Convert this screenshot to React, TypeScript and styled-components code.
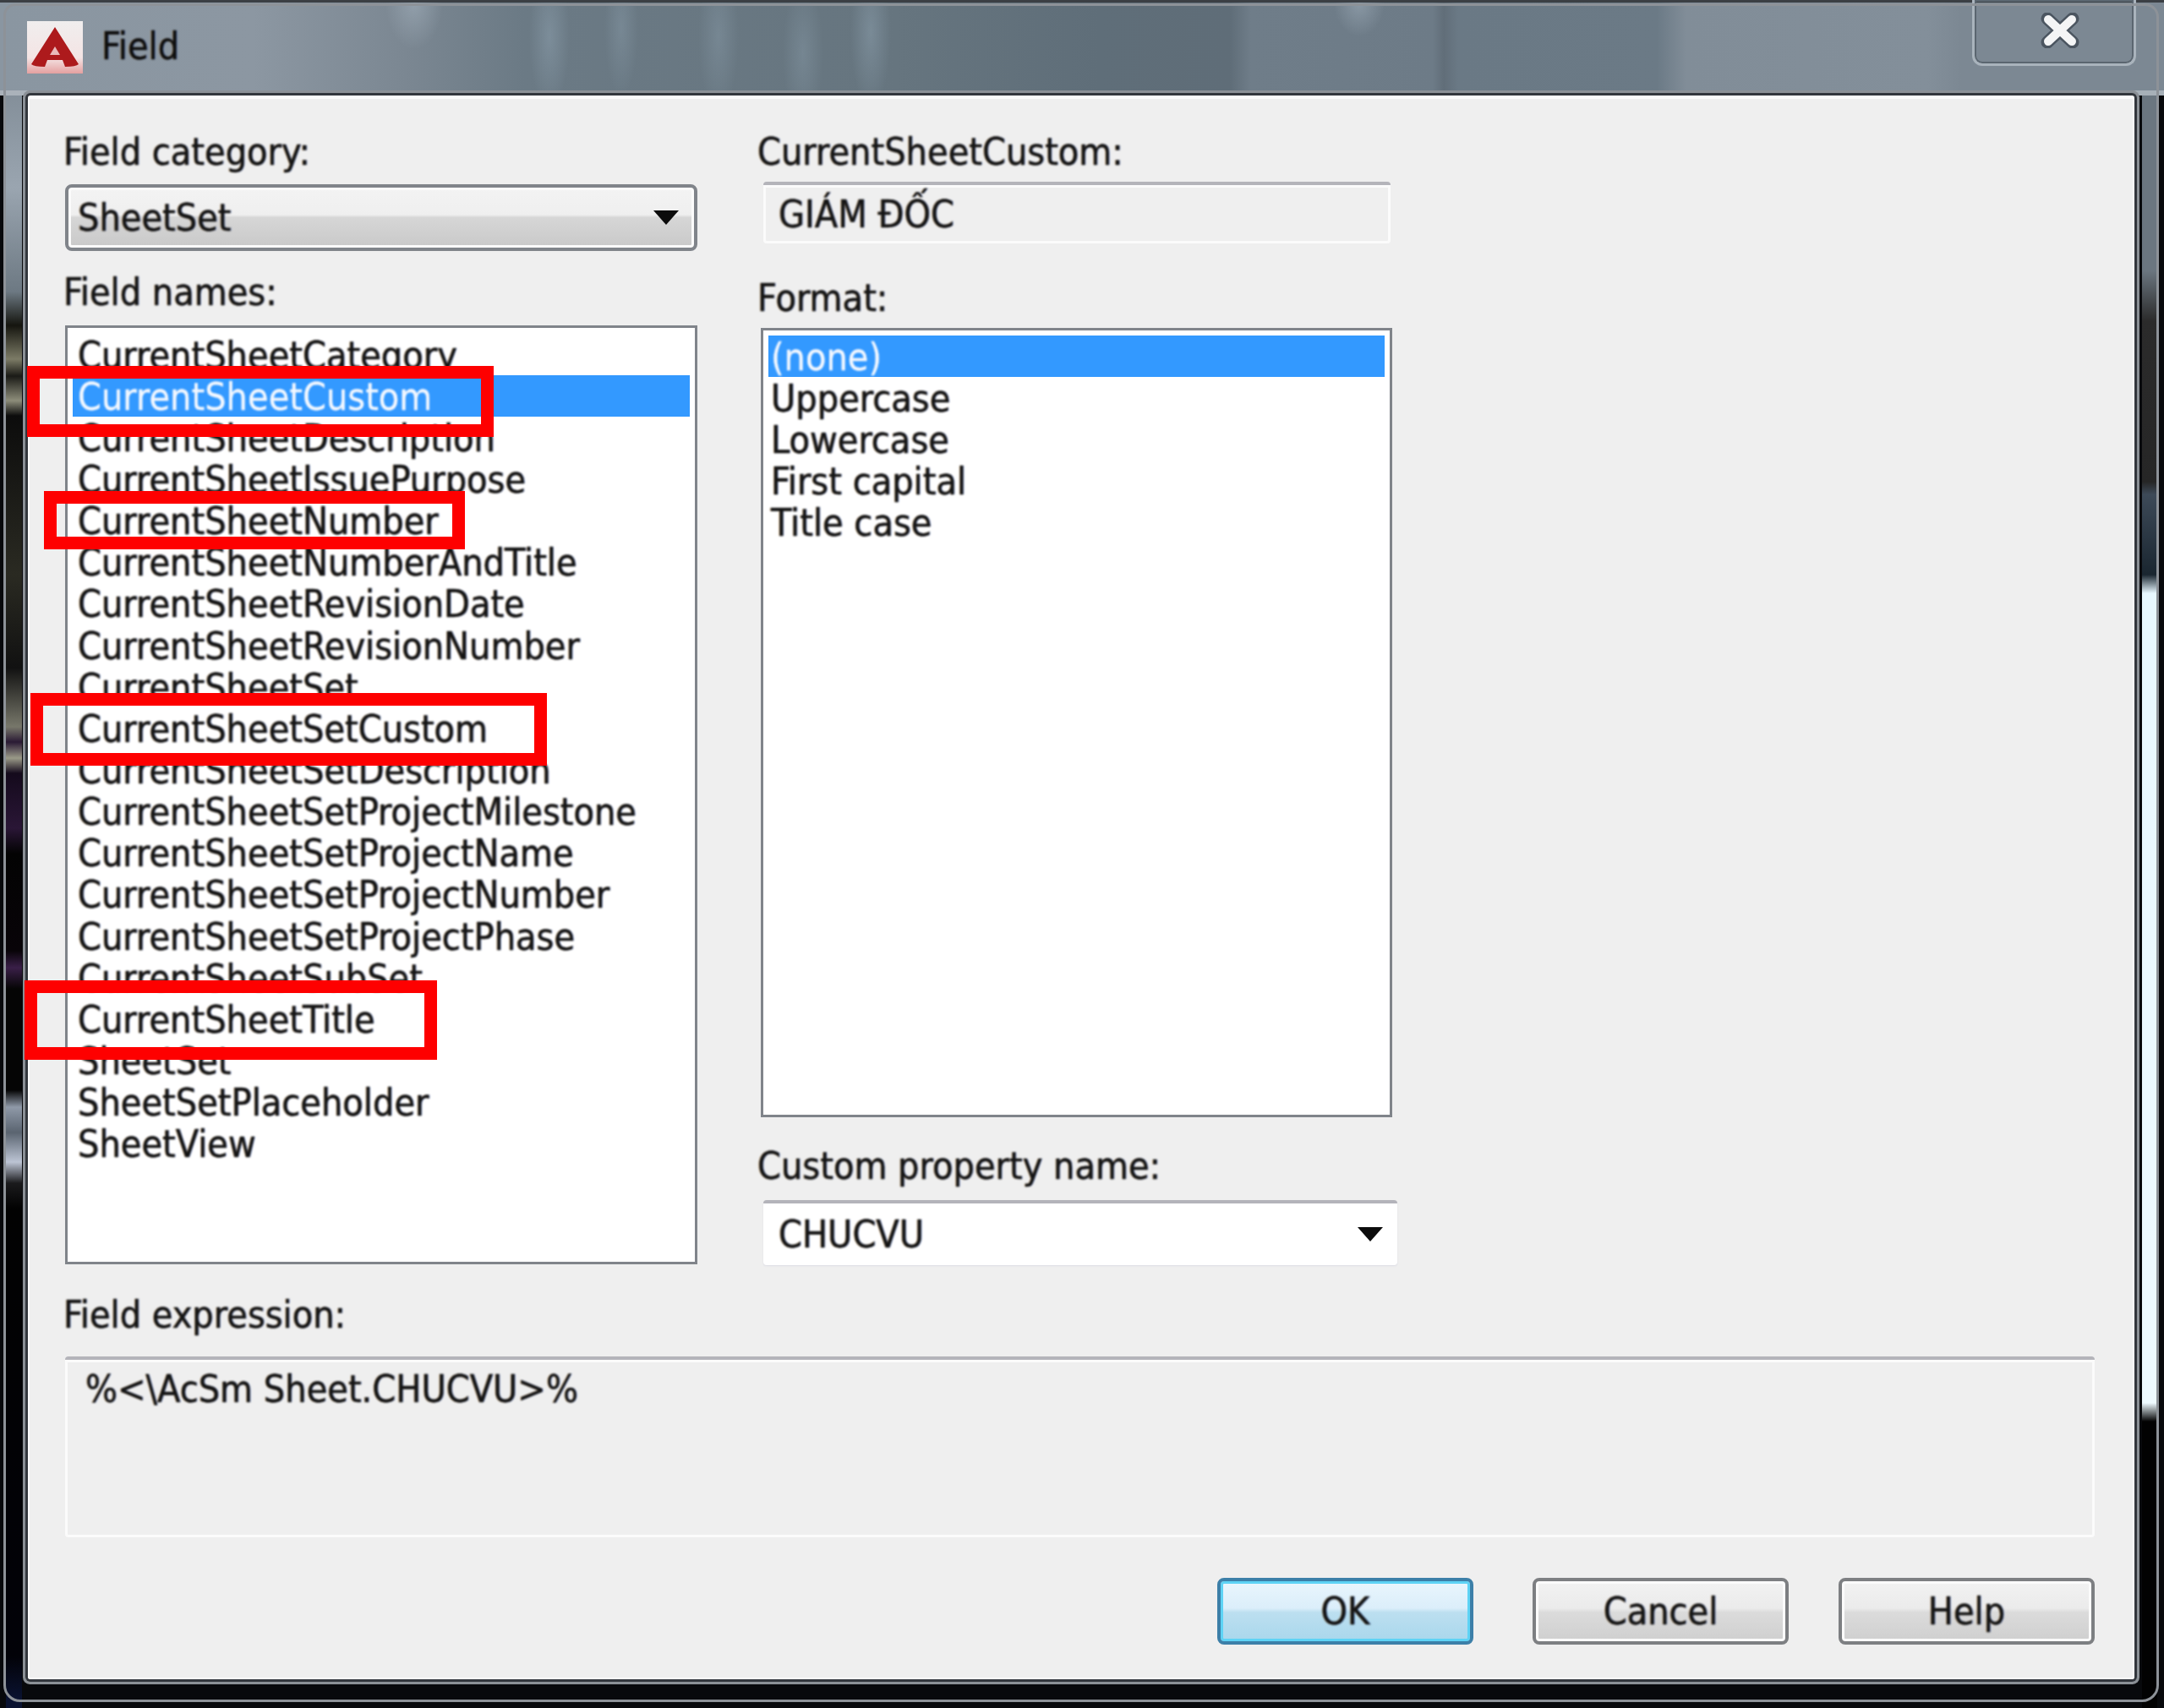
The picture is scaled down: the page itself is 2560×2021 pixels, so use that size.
import styled, { createGlobalStyle } from 'styled-components';

const FIELD_NAMES = [
  'CurrentSheetCategory',
  'CurrentSheetCustom',
  'CurrentSheetDescription',
  'CurrentSheetIssuePurpose',
  'CurrentSheetNumber',
  'CurrentSheetNumberAndTitle',
  'CurrentSheetRevisionDate',
  'CurrentSheetRevisionNumber',
  'CurrentSheetSet',
  'CurrentSheetSetCustom',
  'CurrentSheetSetDescription',
  'CurrentSheetSetProjectMilestone',
  'CurrentSheetSetProjectName',
  'CurrentSheetSetProjectNumber',
  'CurrentSheetSetProjectPhase',
  'CurrentSheetSubSet',
  'CurrentSheetTitle',
  'SheetSet',
  'SheetSetPlaceholder',
  'SheetView',
];

const FORMATS = ['(none)', 'Uppercase', 'Lowercase', 'First capital', 'Title case'];

const MARKS = [
  { x: 32, y: 433, w: 552, h: 84 },
  { x: 52, y: 581, w: 498, h: 69 },
  { x: 36, y: 820, w: 611, h: 86 },
  { x: 29, y: 1160, w: 488, h: 94 },
];

function App() {
  return (
    <Window>
      <GlobalStyle />
      <TitleBar>
        <AppIcon viewBox="0 0 66 62">
          <defs>
            <linearGradient id="iconBack" x1="0" y1="0" x2="0" y2="1">
              <stop offset="0" stopColor="#f0eeee" />
              <stop offset="0.7" stopColor="#f4e4e4" />
              <stop offset="1" stopColor="#e4a0a0" />
            </linearGradient>
          </defs>
          <rect width="66" height="62" fill="url(#iconBack)" />
          <path
            d="M33 7 L61 51 Q58 54 45 54 L42 46 H24 L21 54 Q8 54 5 51 Z"
            fill="#ad1a1c"
          />
          <path d="M33 30 L39 40 H27 Z" fill="#e9b9b9" />
        </AppIcon>
        <WindowTitle>Field</WindowTitle>
        <CloseButton>
          <svg width="48" height="42" viewBox="0 0 48 42">
            <path
              d="M9 7 L39 35 M39 7 L9 35"
              stroke="#4b5560"
              strokeWidth="15"
              strokeLinecap="round"
            />
            <path
              d="M10 8 L38 34 M38 8 L10 34"
              stroke="#f4f5f6"
              strokeWidth="10"
              strokeLinecap="round"
            />
          </svg>
        </CloseButton>
      </TitleBar>
      <Client>
        <Columns>
          <LeftColumn>
            <Label>Field category:</Label>
            <CategorySelect>
              <FieldText>SheetSet</FieldText>
              <Arrow />
            </CategorySelect>
            <NamesLabel>Field names:</NamesLabel>
            <NamesList>
              {FIELD_NAMES.map((name) => (
                <ListRow key={name} $indent={6} $selected={name === 'CurrentSheetCustom'}>
                  <FieldText>{name}</FieldText>
                </ListRow>
              ))}
            </NamesList>
          </LeftColumn>
          <RightColumn>
            <Label>CurrentSheetCustom:</Label>
            <ReadOnlyBox>
              <FieldText>GIÁM ĐỐC</FieldText>
            </ReadOnlyBox>
            <FormatLabel>Format:</FormatLabel>
            <FormatList>
              {FORMATS.map((name) => (
                <ListRow key={name} $indent={3} $selected={name === '(none)'}>
                  <FieldText>{name}</FieldText>
                </ListRow>
              ))}
            </FormatList>
            <CustomLabel>Custom property name:</CustomLabel>
            <CustomSelect>
              <FieldText>CHUCVU</FieldText>
              <Arrow />
            </CustomSelect>
          </RightColumn>
        </Columns>
        <ExpressionLabel>Field expression:</ExpressionLabel>
        <ExpressionBox>
          <FieldText>%&lt;\AcSm Sheet.CHUCVU&gt;%</FieldText>
        </ExpressionBox>
        <ButtonRow>
          <DialogButton $primary>
            <FieldText>OK</FieldText>
          </DialogButton>
          <DialogButton>
            <FieldText>Cancel</FieldText>
          </DialogButton>
          <DialogButton>
            <FieldText>Help</FieldText>
          </DialogButton>
        </ButtonRow>
      </Client>
      {MARKS.map((mark) => (
        <RedMark key={mark.y} $x={mark.x} $y={mark.y} $w={mark.w} $h={mark.h} />
      ))}
    </Window>
  );
}

const GlobalStyle = createGlobalStyle`
  html, body {
    margin: 0;
    padding: 0;
    background: #111;
  }
`;

const textFont = `
  font-family: 'DejaVu Sans', Verdana, sans-serif;
  font-stretch: condensed;
  font-size: 44.5px;
  line-height: 50px;
  -webkit-text-stroke: 0.3px currentColor;
  filter: blur(0.8px);
  text-shadow: -1px 0 rgba(190, 110, 0, 0.4), 1px 0 rgba(0, 60, 190, 0.4);
`;

const Window = styled.div`
  position: relative;
  width: 2560px;
  height: 2021px;
  overflow: hidden;
  box-sizing: border-box;
  display: flex;
  flex-direction: column;
  padding: 0 35px 34px 33px;
  background:
    linear-gradient(
        180deg,
        #6d7983 0,
        #9aa5b0 222px,
        #6d7983 345px,
        #15150f 385px,
        #7c7b66 425px,
        #1a1a16 445px,
        #8d8d7a 474px,
        #0c0c0c 492px,
        #2a2a22 680px,
        #111 790px,
        #77776a 860px,
        #2a1a34 878px,
        #9a9a88 897px,
        #140a1c 915px,
        #2a1636 980px,
        #030303 1010px,
        #080408 1125px,
        #3a1f48 1145px,
        #050505 1170px,
        #050505 1290px,
        #8f99a8 1310px,
        #5a6470 1340px,
        #bcc4d4 1375px,
        #1a1a1c 1400px,
        #020202 1430px,
        #020208 1960px,
        #0a1230 2010px
      )
      7px 0 / 19px 100% no-repeat,
    linear-gradient(
        180deg,
        #6b7680 0,
        #6b7680 320px,
        #2b2b2b 380px,
        #262626 570px,
        #3d4a58 585px,
        #1a2630 680px,
        #e8f8ff 702px,
        #eefaff 1660px,
        #020202 1682px
      )
      2534px 0 / 18px 100% no-repeat,
    #08090c;

  &::after {
    content: '';
    position: absolute;
    inset: 4px 6px 7px 4px;
    border: 3px solid #8d9298;
    border-radius: 14px 16px 20px 20px;
    pointer-events: none;
  }
`;

const TitleBar = styled.div`
  height: 113px;
  margin: 0 -35px 0 -33px;
  padding: 22px 34px 0 32px;
  box-sizing: border-box;
  flex: none;
  display: flex;
  align-items: flex-start;
  gap: 22px;
  border-top: 3px solid #3b3f44;
  background:
    radial-gradient(ellipse 34px 55px at 490px 0, rgba(190, 205, 218, 0.35), transparent),
    radial-gradient(ellipse 30px 40px at 1608px 0, rgba(190, 205, 218, 0.35), transparent),
    radial-gradient(ellipse 24px 85px at 650px 40px, rgba(150, 170, 185, 0.4), transparent),
    radial-gradient(ellipse 20px 80px at 735px 30px, rgba(150, 170, 185, 0.3), transparent),
    radial-gradient(ellipse 24px 90px at 850px 40px, rgba(150, 170, 185, 0.3), transparent),
    radial-gradient(ellipse 24px 85px at 950px 60px, rgba(150, 170, 185, 0.3), transparent),
    radial-gradient(ellipse 24px 90px at 1030px 35px, rgba(150, 170, 185, 0.4), transparent),
    linear-gradient(
      90deg,
      #8a96a1 0,
      #8c97a2 300px,
      #7b8792 480px,
      #6b7a85 620px,
      #66757f 1060px,
      #5f6e79 1300px,
      #5f6d78 1455px,
      #6f7d89 1480px,
      #6d7b87 1695px,
      #616e79 1708px,
      #6a7985 1725px,
      #6b7a86 1960px,
      #818d98 1995px,
      #838f9a 2280px,
      #7c8893 2320px,
      #7c8893 2560px
    );
  box-shadow: inset 0 -6px 0 rgba(175, 183, 190, 0.85);
`;

const AppIcon = styled.svg`
  width: 66px;
  height: 62px;
  flex: none;
`;

const WindowTitle = styled.span`
  ${textFont}
  color: #0e0e0e;
  margin-top: 5px;
`;

const CloseButton = styled.div`
  margin-left: auto;
  margin-right: -1px;
  margin-top: -25px;
  width: 194px;
  height: 78px;
  box-sizing: border-box;
  display: flex;
  justify-content: center;
  padding: 15px 0 0 14px;
  border: 3px solid #a9b3bc;
  border-top: none;
  border-radius: 0 0 12px 12px;
  box-shadow: inset 0 0 0 2px #5b6670;
`;

const Client = styled.div`
  flex: 1;
  min-height: 0;
  box-sizing: border-box;
  display: flex;
  flex-direction: column;
  padding: 40px 47px 0 44px;
  background: #efefef;
  border-top: 2px solid #fafafa;
  border-radius: 3px;
  box-shadow: 0 0 0 3px #32363c, 0 0 0 6px #8b9096, inset 0 0 0 2px #fbfbfb;
`;

const Columns = styled.div`
  display: flex;
  gap: 73px;
`;

const LeftColumn = styled.div`
  width: 748px;
  flex: none;
  display: flex;
  flex-direction: column;
`;

const RightColumn = styled.div`
  width: 755px;
  flex: none;
  display: flex;
  flex-direction: column;
`;

const Label = styled.div`
  ${textFont}
  flex: none;
  height: 50px;
  margin-left: -2px;
  color: #141414;
`;

const NamesLabel = styled(Label)`
  margin-top: 24px;
`;

const FormatLabel = styled(Label)`
  margin-top: 40px;
`;

const CustomLabel = styled(Label)`
  margin-top: 33px;
`;

const ExpressionLabel = styled(Label)`
  margin-top: 34px;
`;

const FieldText = styled.span`
  ${textFont}
  color: #141414;
  white-space: nowrap;
`;

const Arrow = styled.span`
  margin-left: auto;
  width: 0;
  height: 0;
  border-left: 15px solid transparent;
  border-right: 15px solid transparent;
  border-top: 17px solid #0c0c0c;
`;

const CategorySelect = styled.div`
  margin-top: 13px;
  height: 79px;
  flex: none;
  box-sizing: border-box;
  display: flex;
  align-items: center;
  padding: 0 18px 0 11px;
  border: 4px solid #80848a;
  border-radius: 8px;
  background: linear-gradient(180deg, #f3f3f3 0, #efefef 45%, #d6d6d6 50%, #c9c9c9 100%);
  box-shadow: inset 0 0 0 3px #fbfbfb;
`;

const NamesList = styled.div`
  margin-top: 14px;
  height: 1111px;
  flex: none;
  box-sizing: border-box;
  padding: 7px 6px 0;
  border: 3px solid #80848a;
  background: #fff;
`;

const FormatList = styled.div`
  margin: 10px 0 0 2px;
  width: 747px;
  height: 934px;
  flex: none;
  box-sizing: border-box;
  padding: 6px 6px 0;
  border: 3px solid #80848a;
  background: #fff;
`;

const ListRow = styled.div<{ $selected?: boolean; $indent: number }>`
  height: 49.15px;
  box-sizing: border-box;
  padding: 2px 0 0 ${(p) => p.$indent}px;
  display: flex;
  align-items: center;
  background: ${(p) => (p.$selected ? '#3399ff' : 'transparent')};

  ${FieldText} {
    color: ${(p) => (p.$selected ? '#f4f8ff' : '#141414')};
    text-shadow: ${(p) =>
      p.$selected ? 'none' : '-1px 0 rgba(190, 110, 0, 0.4), 1px 0 rgba(0, 60, 190, 0.4)'};
  }
`;

const ReadOnlyBox = styled.div`
  margin: 10px 0 0 5px;
  width: 742px;
  height: 73px;
  flex: none;
  box-sizing: border-box;
  display: flex;
  align-items: center;
  padding: 0 18px;
  border-top: 4px solid #b4b4ba;
  border-radius: 4px;
  background: #efefef;
  box-shadow: inset 0 0 0 3px #fbfbfb;
`;

const CustomSelect = styled.div`
  margin: 15px 0 0 5px;
  width: 750px;
  height: 77px;
  flex: none;
  box-sizing: border-box;
  display: flex;
  align-items: center;
  padding: 0 17px 0 18px;
  border-top: 4px solid #b4b4ba;
  border-radius: 4px;
  background: #fff;
  box-shadow: 0 1px 2px #dcdce4;
`;

const ExpressionBox = styled.div`
  margin-top: 24px;
  height: 214px;
  flex: none;
  box-sizing: border-box;
  padding: 10px 24px;
  border-top: 4px solid #b4b4ba;
  border-radius: 4px;
  background: #efefef;
  box-shadow: inset 0 0 0 3px #fbfbfb;
`;

const ButtonRow = styled.div`
  margin-top: 48px;
  display: flex;
  justify-content: flex-end;
  gap: 59px;
`;

const DialogButton = styled.div<{ $primary?: boolean }>`
  width: 303px;
  height: 79px;
  flex: none;
  margin-right: ${(p) => (p.$primary ? '11px' : '0')};
  box-sizing: border-box;
  display: flex;
  align-items: center;
  justify-content: center;
  border: 4px solid ${(p) => (p.$primary ? '#3c7fa8' : '#7d7f82')};
  border-radius: 8px;
  background: ${(p) =>
    p.$primary
      ? 'linear-gradient(180deg, #eaf6fd 0, #dbeefa 45%, #bcdff0 52%, #a9d7ec 100%)'
      : 'linear-gradient(180deg, #f2f2f2 0, #ebebeb 45%, #dbdbdb 52%, #cfcfcf 100%)'};
  box-shadow: inset 0 0 0 3px ${(p) => (p.$primary ? '#5ed3f5' : '#fbfbfb')};
`;

const RedMark = styled.div<{ $x: number; $y: number; $w: number; $h: number }>`
  position: absolute;
  left: ${(p) => p.$x}px;
  top: ${(p) => p.$y}px;
  width: ${(p) => p.$w}px;
  height: ${(p) => p.$h}px;
  box-sizing: border-box;
  border: 15px solid #fe0000;
`;

export default App;
